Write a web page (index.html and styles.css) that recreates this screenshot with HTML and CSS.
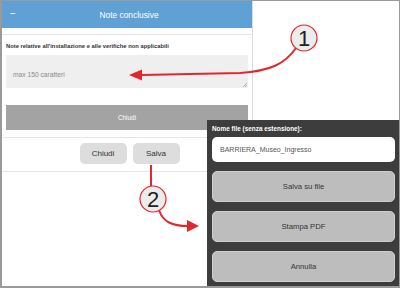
FILE: index.html
```html
<!DOCTYPE html>
<html>
<head>
<meta charset="utf-8">
<link rel="stylesheet" href="styles.css">
</head>
<body>
<div class="frame">
  <div class="modal">
    <div class="modal-header">
      <span class="collapse">&minus;</span>
      <span class="title">Note conclusive</span>
    </div>
    <div class="modal-body">
      <div class="field-label">Note relative all'installazione e alle verifiche non applicabili</div>
      <div class="textarea">
        <span class="placeholder">max 150 caratteri</span>
        <svg class="grip" width="5" height="5" viewBox="0 0 5 5"><path d="M1 5 L5 1 M3 5 L5 3" stroke="#999" stroke-width="0.7"/></svg>
      </div>
      <div class="wide-btn">Chiudi</div>
    </div>
    <div class="modal-footer">
      <div class="btn">Chiudi</div>
      <div class="btn">Salva</div>
    </div>
  </div>

  <div class="save-panel">
    <div class="panel-label">Nome file (senza estensione):</div>
    <div class="file-input">BARRIERA_Museo_Ingresso</div>
    <div class="panel-btn">Salva su file</div>
    <div class="panel-btn">Stampa PDF</div>
    <div class="panel-btn">Annulla</div>
  </div>

  <svg class="annotations" width="400" height="288" viewBox="0 0 400 288">
    <path d="M296,48 C285,64 270,71 240,73 L141,75" fill="none" stroke="#e3262b" stroke-width="2"/>
    <polygon points="129,75 142,69.5 142,80.5" fill="#e3262b"/>
    <circle cx="304" cy="38" r="13" fill="#ececec" stroke="#e3262b" stroke-width="1.2"/>
    <text x="304" y="46" class="num">1</text>

    <path d="M151,165 L151,186" fill="none" stroke="#e3262b" stroke-width="2"/>
    <path d="M159,210 C163,222 172,226 188,226" fill="none" stroke="#e3262b" stroke-width="2"/>
    <polygon points="199,226 187,220 187,232" fill="#e3262b"/>
    <circle cx="153" cy="199" r="13" fill="#ececec" stroke="#e3262b" stroke-width="1.2"/>
    <text x="153" y="207" class="num">2</text>
  </svg>
</div>
</body>
</html>
```

FILE: styles.css
```css
html, body {
  margin: 0;
  padding: 0;
  background: #ffffff;
}

body {
  font-family: "Liberation Sans", Arial, sans-serif;
}

.frame {
  position: relative;
  width: 400px;
  height: 288px;
  box-sizing: border-box;
  border: 1px solid #9a9a9a;
  border-left-width: 2px;
  border-bottom-width: 2px;
  background: #ffffff;
  overflow: hidden;
}

.modal {
  width: 251px;
  height: 100%;
  box-sizing: border-box;
  border-right: 1px solid #dcdcdc;
}

.modal-header {
  position: relative;
  height: 27px;
  background: #5fa0d5;
  display: flex;
  align-items: center;
  justify-content: center;
  color: #ffffff;
}

.collapse {
  position: absolute;
  left: 8px;
  top: 7px;
  font-size: 10px;
  line-height: 12px;
}

.title {
  font-size: 8.4px;
  padding-left: 4px;
}

.modal-body {
  margin-top: 6px;
  border-top: 1px solid #e6e6e6;
  padding: 0 4px 0 4px;
}

.field-label {
  padding-top: 7px;
  font-size: 5.8px;
  line-height: 8px;
  font-weight: bold;
  color: #333333;
  white-space: nowrap;
}

.textarea {
  position: relative;
  margin-top: 5px;
  height: 33px;
  background: #efefef;
  box-sizing: border-box;
  padding: 8px 7px;
}

.placeholder {
  font-size: 6.7px;
  line-height: 8px;
  color: #8a8a8a;
}

.grip {
  position: absolute;
  right: 1px;
  bottom: 1px;
}

.wide-btn {
  margin-top: 17px;
  height: 25px;
  background: #a3a3a3;
  color: #ffffff;
  font-size: 6.4px;
  display: flex;
  align-items: center;
  justify-content: center;
}

.modal-footer {
  margin-top: 7px;
  border-top: 1px solid #e6e6e6;
  border-bottom: 1px solid #e6e6e6;
  padding: 5px 0 7px 5px;
  display: flex;
  justify-content: center;
  gap: 6px;
}

.btn {
  width: 47px;
  height: 21px;
  border-radius: 5px;
  background: #dddddd;
  color: #333333;
  font-size: 8px;
  display: flex;
  align-items: center;
  justify-content: center;
}

.save-panel {
  position: absolute;
  left: 205px;
  top: 119px;
  right: 0;
  bottom: 0;
  background: #3d3d3d;
  box-sizing: border-box;
  padding: 5px 4px 0 5px;
  display: flex;
  flex-direction: column;
}

.panel-label {
  font-size: 6.4px;
  line-height: 8px;
  font-weight: bold;
  color: #ffffff;
  white-space: nowrap;
}

.file-input {
  margin-top: 4px;
  height: 25px;
  border-radius: 5px;
  background: #ffffff;
  color: #555555;
  font-size: 7px;
  display: flex;
  align-items: center;
  padding-left: 8px;
}

.panel-btn {
  margin-top: 9px;
  height: 31px;
  flex: none;
  border-radius: 5px;
  background: #bdbdbd;
  border: 1px solid #cfcfcf;
  box-sizing: border-box;
  color: #333333;
  font-size: 7.7px;
  display: flex;
  align-items: center;
  justify-content: center;
}

.annotations {
  position: absolute;
  left: -2px;
  top: -1px;
  pointer-events: none;
}

.num {
  font-family: "Liberation Sans", Arial, sans-serif;
  font-size: 22px;
  fill: #222222;
  text-anchor: middle;
}
```
